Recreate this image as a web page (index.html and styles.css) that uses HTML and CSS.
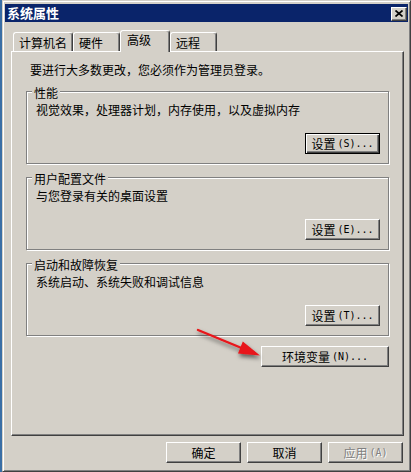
FILE: index.html
```html
<!DOCTYPE html>
<html lang="zh-CN">
<head>
<meta charset="utf-8">
<title>系统属性</title>
<link rel="stylesheet" href="styles.css">
</head>
<body>
<div class="window">
  <div class="titlebar">
    <span class="title">系统属性</span>
    <span class="close"><svg width="8" height="7" viewBox="0 0 8 7"><path d="M0.5 0.5 L7.5 6.5 M7.5 0.5 L0.5 6.5" stroke="#000" stroke-width="1.7" fill="none"/></svg></span>
  </div>
  <div class="content">
    <div class="tabs">
      <div class="tab t1">计算机名</div>
      <div class="tab t2">硬件</div>
      <div class="tab t3 active">高级</div>
      <div class="tab t4">远程</div>
    </div>
    <div class="panel">
      <p class="note">要进行大多数更改，您必须作为管理员登录。</p>
      <div class="group">
        <div class="legend">性能</div>
        <p class="desc">视觉效果，处理器计划，内存使用，以及虚拟内存</p>
        <div class="row"><button class="btn btn-set default">设置<span class="k">(S)...</span></button></div>
      </div>
      <div class="group">
        <div class="legend">用户配置文件</div>
        <p class="desc">与您登录有关的桌面设置</p>
        <div class="row"><button class="btn btn-set">设置<span class="k">(E)...</span></button></div>
      </div>
      <div class="group">
        <div class="legend">启动和故障恢复</div>
        <p class="desc">系统启动、系统失败和调试信息</p>
        <div class="row"><button class="btn btn-set">设置<span class="k">(T)...</span></button></div>
      </div>
      <div class="row env-row"><button class="btn btn-env">环境变量<span class="k">(N)...</span></button></div>
    </div>
    <div class="actions">
      <button class="btn btn-act">确定</button>
      <button class="btn btn-act">取消</button>
      <button class="btn btn-act disabled">应用<span class="k">(A)</span></button>
    </div>
  </div>
</div>
<svg class="arrow" width="411" height="472" viewBox="0 0 411 472">
  <defs>
    <filter id="sh" x="-30%" y="-30%" width="170%" height="200%">
      <feDropShadow dx="1" dy="3" stdDeviation="2" flood-color="#000" flood-opacity="0.55"/>
    </filter>
  </defs>
  <g filter="url(#sh)">
    <line x1="198" y1="330" x2="244" y2="349" stroke="#e8141a" stroke-width="2.4" stroke-linecap="round"/>
    <polygon points="260,355.5 238,353.5 242.8,341.5" fill="#e8141a"/>
  </g>
</svg>
</body>
</html>
```
FILE: styles.css
```css
* { box-sizing: border-box; }
html, body { margin: 0; padding: 0; }
body {
  background: #3a6ea5;
  width: 411px;
  height: 472px;
  overflow: hidden;
  font-family: "Noto Sans CJK SC", "Liberation Sans", sans-serif;
  font-size: 12px;
  color: #000;
}
.window {
  margin-left: 2px;
  width: 409px;
  height: 472px;
  background: #d4d0c8;
  border: 1px solid;
  border-color: #d4d0c8 #404040 #404040 #d4d0c8;
  box-shadow: inset 1px 1px 0 #fff, inset -1px -1px 0 #808080;
  padding: 3px 2px 2px 2px;
}
.titlebar {
  height: 18px;
  background: #0a246a;
  display: flex;
  align-items: flex-start;
  justify-content: space-between;
  padding-left: 2px;
}
.title {
  color: #fff;
  font-weight: 700;
  line-height: 18px;
  font-size: 13px;
}
.close {
  margin-top: 3px;
  margin-right: 1px;
  width: 16px;
  height: 14px;
  background: #d4d0c8;
  border: 1px solid;
  border-color: #fff #404040 #404040 #fff;
  box-shadow: inset -1px -1px 0 #808080;
  display: flex;
  align-items: center;
  justify-content: center;
}
.close svg { display: block; margin-left: -1px; margin-top: -1px; }
.tabs {
  margin-top: 8px;
  height: 21px;
  display: flex;
  align-items: flex-end;
  padding-left: 8px;
}
.tab {
  height: 19px;
  border-top: 1px solid #fff;
  border-left: 1px solid #fff;
  border-right: 1px solid #404040;
  box-shadow: inset -1px 0 0 #808080;
  border-radius: 3px 3px 0 0;
  padding: 3px 0 0 5px;
  line-height: 14px;
  white-space: nowrap;
}
.t1 { width: 60px; }
.t2 { width: 47px; }
.t3 { width: 50px; }
.t4 { width: 47px; }
.tab.active {
  height: 22px;
  margin-bottom: -1px;
  position: relative;
  z-index: 1;
  background: #d4d0c8;
  padding-top: 2px;
  padding-left: 6px;
}
.panel {
  margin-left: 6px;
  width: 393px;
  height: 385px;
  border: 1px solid;
  border-color: #fff #404040 #404040 #fff;
  box-shadow: inset -1px -1px 0 #808080;
  padding: 11px 14px 0 14px;
}
.note {
  margin: 0 0 0 4px;
  line-height: 14px;
}
.group {
  margin-top: 14px;
  border: 1px solid #808080;
  box-shadow: 1px 1px 0 #fff, inset 1px 1px 0 #fff;
  padding: 0 8px 9px 9px;
}
.group + .group { margin-top: 13px; }
.legend {
  width: fit-content;
  margin: -6px 0 0 -4px;
  padding: 0 2px;
  background: #d4d0c8;
  line-height: 14px;
  height: 14px;
}
.desc {
  margin: 3px 0 0 0;
  line-height: 14px;
}
.row {
  display: flex;
  justify-content: flex-end;
  margin-top: 16px;
}
.env-row { margin-top: 10px; }
.btn {
  font-family: inherit;
  font-size: 12px;
  color: #000;
  background: #d4d0c8;
  border: 1px solid;
  border-color: #fff #404040 #404040 #fff;
  box-shadow: inset -1px -1px 0 #808080;
  border-radius: 0;
  height: 21px;
  padding: 0;
  margin: 0;
  line-height: 14px;
  display: flex;
  align-items: center;
  justify-content: center;
}
.k {
  font-family: "DejaVu Sans Mono", "Liberation Mono", monospace;
  font-size: 10px;
  margin-left: 2px;
}
.btn.default {
  border-color: #000;
  box-shadow: inset 1px 1px 0 #fff, inset -1px -1px 0 #404040, inset -2px -2px 0 #808080;
}
.btn-set { width: 75px; }
.btn-env { width: 128px; }
.actions {
  margin-top: 6px;
  margin-right: 5px;
  display: flex;
  justify-content: flex-end;
  gap: 6px;
}
.btn-act { width: 75px; }
.btn.disabled {
  color: #808080;
  text-shadow: 1px 1px 0 #fff;
}
.arrow {
  position: absolute;
  top: 0;
  left: 0;
  pointer-events: none;
}
```
